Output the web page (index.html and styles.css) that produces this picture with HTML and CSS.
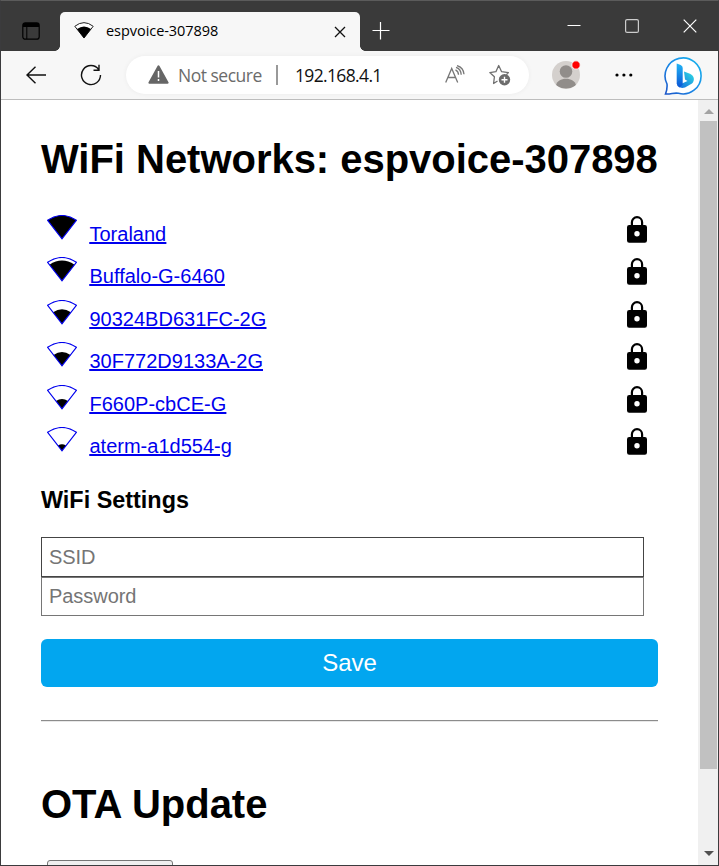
FILE: index.html
```html
<!DOCTYPE html>
<html lang="en">
<head>
<meta charset="utf-8">
<title>espvoice-307898</title>
<link rel="stylesheet" href="styles.css">
</head>
<body>
<svg class="defs" aria-hidden="true">
  <symbol id="fan" viewBox="0 0 30 25"><path d="M.6 5.300Q15-4.300 29.400 5.300L15 23.800Z"/></symbol>
  <symbol id="lock" viewBox="0 0 20 27"><path d="M4.9 10V6.3a5.1 5.1 0 0 1 10.2 0V10" fill="none" stroke="#000" stroke-width="2.200"/><path fill-rule="evenodd" d="M2.2 9h15.6A2.2 2.2 0 0 1 20 11.200V24.500a2.200 2.200 0 0 1-2.200 2.200H2.200A2.200 2.200 0 0 1 0 24.500V11.200A2.200 2.200 0 0 1 2.200 9ZM10 15.100a2.700 2.700 0 1 0 0 5.400 2.700 2.700 0 0 0 0-5.400Z"/></symbol>
</svg>
<div class="window">
  <header class="tabbar">
    <svg class="workspace" width="18" height="18" viewBox="0 0 18 18"><rect x=".8" y=".8" width="16.400" height="16.400" rx="2.500" fill="none" stroke="#000" stroke-width="1.200"/><path d="M1 1h16v4H1zM4.300 5h1v12h-1z"/></svg>
    <div class="tab">
      <svg class="favicon" width="20" height="17" viewBox="0 0 20 17"><path d="M.8 4.300Q10-3 19.200 4.300L10 16Z" fill="#fff" stroke="#222"/><path d="M3 7Q10 2 17 7L10 16.300Z"/></svg>
      <span class="tab-title">espvoice-307898</span>
      <svg class="tab-close" width="12" height="12" viewBox="0 0 12 12"><path d="M1 1l10 10M11 1L1 11" stroke="#111" stroke-width="1.300"/></svg>
    </div>
    <svg class="plus" width="18" height="18" viewBox="0 0 18 18"><path d="M.5 8.500h17M8.500 0v17.500" stroke="#fff" stroke-width="1.200"/></svg>
    <div class="controls">
      <svg width="14" height="14" viewBox="0 0 14 14"><path d="M.5 6.500h13" stroke="#fff"/></svg>
      <svg width="14" height="14" viewBox="0 0 14 14"><rect x=".6" y=".6" width="12.800" height="12.800" rx="1.500" fill="none" stroke="#ccc" stroke-width="1.200"/></svg>
      <svg width="14" height="14" viewBox="0 0 14 14"><path d="M.7.700l12.600 12.600M13.300.700L.7 13.300" stroke="#fff" stroke-width="1.200"/></svg>
    </div>
  </header>
  <nav class="toolbar">
    <svg class="back" width="22" height="20" viewBox="0 0 22 20"><path d="M10.500 1.700L2 10l8.500 8.300M2 10H21" fill="none" stroke="#111" stroke-width="1.400"/></svg>
    <svg class="reload" width="22" height="22" viewBox="0 0 22 22"><path d="M18.700 5.500A9.500 9.500 0 1 0 20.500 11M19 .8v5.400h-5.500" fill="none" stroke="#111" stroke-width="1.400"/></svg>
    <div class="address">
      <svg class="warn" width="21" height="19" viewBox="0 0 21 19"><path d="M10.500 1.300L19.600 17.700H1.400Z" fill="#666" stroke="#666" stroke-width="2" stroke-linejoin="round"/><path d="M10.500 6v6.500M10.500 14v2" stroke="#fff" stroke-width="1.500"/></svg>
      <span class="secure">Not secure</span>
      <i class="bar"></i>
      <span class="url">192.168.4.1</span>
      <svg class="read" width="20" height="19" viewBox="0 0 20 19"><path d="M.7 17.500L6.700 3.500l6 14M2.800 12.500h7.800M10.500 4.800q3 1.500 3 5M11 2.300q5 1.500 5.200 7.500M12 .6q6.500 2 7 8.600" fill="none" stroke="#777" stroke-width="1.300"/></svg>
      <svg class="star" width="22" height="22" viewBox="0 0 22 22"><path d="M8.500 17L4.600 19.500l.8-6.700L.8 8.600l6.100-.9L9.700 1.500l2.900 6.200 6.800.9-2 2.100" fill="none" stroke="#707070" stroke-width="1.300" stroke-linejoin="round"/><circle cx="15.500" cy="15.700" r="5.700" fill="#6c6c6c"/><path d="M12.500 15.700h6M15.500 12.700v6" stroke="#fff" stroke-width="1.400"/></svg>
    </div>
    <svg class="profile" width="30" height="30" viewBox="0 0 30 30"><defs><clipPath id="av"><circle cx="14" cy="16" r="14"/></clipPath></defs><circle cx="14" cy="16" r="14" fill="#d4d0cd"/><g fill="#918d8a" clip-path="url(#av)"><circle cx="14" cy="12.500" r="6.300"/><path d="M4 26.500c1-9 19-9 20 0q-10 6-20 0Z"/></g><circle cx="24" cy="6" r="4.200" fill="#f00" stroke="#f7f7f7"/></svg>
    <svg class="more" width="18" height="4" viewBox="0 0 18 4"><circle cx="2" cy="2" r="1.600"/><circle cx="8.900" cy="2" r="1.600"/><circle cx="15.800" cy="2" r="1.600"/></svg>
    <svg class="bing" width="40" height="40" viewBox="0 0 40 40"><defs><linearGradient id="ring" x1="1" y1="0" x2="0" y2="1"><stop stop-color="#18b7ed"/><stop offset=".5" stop-color="#1a8ce8"/><stop offset="1" stop-color="#1b55c8"/></linearGradient><linearGradient id="stem" x1="0" y1="0" x2="0" y2="1"><stop stop-color="#22b5f5"/><stop offset="1" stop-color="#0b54d4"/></linearGradient><linearGradient id="bowl" x1="1" y1="0" x2="0" y2="1"><stop stop-color="#30e0e4"/><stop offset="1" stop-color="#1265dc"/></linearGradient></defs><path d="M1.500 38Q3.500 33 3 28A18 18 0 1 1 14.500 37.300C10 36.300 7 38.500 1.500 38Z" fill="#fff" stroke="url(#ring)" stroke-width="1.600"/><path d="M20 15.500l6 2.300c4.500 2 5 7 2 9.800L21 31.500q-5 1.500-7.500-2l10-4.500-2.500-1.500Z" fill="url(#bowl)"/><path d="M12.700 7.500l4 1.500q2 1 2 3V28.500l-3 3q-2.800-1-3-4Z" fill="url(#stem)"/></svg>
  </nav>
  <div class="viewport">
    <main class="page">
      <h1>WiFi Networks: espvoice-307898</h1>
      <ul class="networks">
        <li><a href="#"><svg class="signal"><path class="level" d="M.6 5.300Q15-4.300 29.400 5.300L15 23.800Z"/><use href="#fan"/></svg><span>Toraland</span></a><svg class="lock"><use href="#lock"/></svg></li>
        <li><a href="#"><svg class="signal"><g transform="translate(15 23.800) scale(.87) translate(-15 -23.800)"><path class="level" d="M.6 5.300Q15-4.300 29.400 5.300L15 23.800Z"/></g><use href="#fan"/></svg><span>Buffalo-G-6460</span></a><svg class="lock"><use href="#lock"/></svg></li>
        <li><a href="#"><svg class="signal"><g transform="translate(15 23.800) scale(.62) translate(-15 -23.800)"><path class="level" d="M.6 5.300Q15-4.300 29.400 5.300L15 23.800Z"/></g><use href="#fan"/></svg><span>90324BD631FC-2G</span></a><svg class="lock"><use href="#lock"/></svg></li>
        <li><a href="#"><svg class="signal"><g transform="translate(15 23.800) scale(.59) translate(-15 -23.800)"><path class="level" d="M.6 5.300Q15-4.300 29.400 5.300L15 23.800Z"/></g><use href="#fan"/></svg><span>30F772D9133A-2G</span></a><svg class="lock"><use href="#lock"/></svg></li>
        <li><a href="#"><svg class="signal"><g transform="translate(15 23.800) scale(.42) translate(-15 -23.800)"><path class="level" d="M.6 5.300Q15-4.300 29.400 5.300L15 23.800Z"/></g><use href="#fan"/></svg><span>F660P-cbCE-G</span></a><svg class="lock"><use href="#lock"/></svg></li>
        <li><a href="#"><svg class="signal"><g transform="translate(15 23.800) scale(.28) translate(-15 -23.800)"><path class="level" d="M.6 5.300Q15-4.300 29.400 5.300L15 23.800Z"/></g><use href="#fan"/></svg><span>aterm-a1d554-g</span></a><svg class="lock"><use href="#lock"/></svg></li>
      </ul>
      <h3>WiFi Settings</h3>
      <form>
        <input class="ssid" type="text" placeholder="SSID">
        <input class="password" type="password" placeholder="Password">
        <button class="save" type="button">Save</button>
      </form>
      <hr>
      <h1 class="ota">OTA Update</h1>
      <div class="file-button"></div>
    </main>
    <aside class="scrollbar">
      <svg width="10" height="5" viewBox="0 0 10 5"><path d="M0 5L5 0l5 5Z" fill="#a3a3a3"/></svg>
      <div class="thumb"></div>
      <svg class="down" width="10" height="5" viewBox="0 0 10 5"><path d="M0 0h10L5 5Z" fill="#505050"/></svg>
    </aside>
  </div>
</div>
</body>
</html>
```
FILE: styles.css
```css
* { box-sizing: border-box; }
body { margin: 0; overflow: hidden; font-family: "Liberation Sans", Arial, sans-serif; }
svg { display: block; flex: none; }
.defs { width: 0; height: 0; position: absolute; }
.window { width: 719px; height: 866px; border: 1px solid #3b3b3d; border-top-color: #5b5b5b; display: flex; flex-direction: column; overflow: hidden; background: #fff; }
.tabbar { height: 50px; flex: none; background: #3a3a3a; display: flex; align-items: flex-start; }
.workspace { margin: 21px 0 0 21px; }
.tab { position: relative; margin: 11px 0 0 20px; width: 300px; height: 39px; background: #f7f7f7; border-radius: 5px 5px 0 0; display: flex; align-items: center; padding: 0 14px; font: 14.5px/20px "Open Sans", "Noto Sans", sans-serif; }
.tab::before, .tab::after { content: ""; position: absolute; bottom: 0; width: 5px; height: 5px; }
.tab::before { left: -5px; background: radial-gradient(circle at 0 0, #3a3a3a 4.5px, #f7f7f7 5px); }
.tab::after { right: -5px; background: radial-gradient(circle at 100% 0, #3a3a3a 4.5px, #f7f7f7 5px); }
.favicon { margin: 0 12px 3px 0; }
.tab-title { letter-spacing: -.05px; white-space: nowrap; margin-top: -2px; }
.tab-close { margin-left: auto; margin-top: 1px; }
.plus { margin: 21px 0 0 12px; }
.controls { display: flex; gap: 44px; margin: 18px 21px 0 auto; }
.toolbar { height: 49px; flex: none; background: #f7f7f7; border-bottom: 1px solid #bdbdbd; display: flex; align-items: center; font: 17.5px/24px "Open Sans", "Noto Sans", sans-serif; }
.back { margin-left: 24px; margin-top: -1px; }
.reload { margin-left: 33px; }
.address { width: 403px; height: 38px; margin-left: 24px; border-radius: 19px; background: #fff; box-shadow: 0 0 5px #0000000d; display: flex; align-items: center; padding-left: 22px; white-space: nowrap; }
.warn { margin-top: -1px; }
.secure { color: #6b6b6b; width: 98px; margin: -1px 0 0 9px; letter-spacing: -.5px; }
.bar { width: 2px; height: 20px; background: #999; }
.url { margin: -1px 0 0 17px; width: 150px; letter-spacing: -.65px; color: #111; }
.read { margin-top: -2px; }
.star { margin-left: 24px; }
.profile { margin: -2px 0 0 23px; }
.more { margin-left: 33px; }
.bing { margin-left: 31px; margin-top: 1px; }
.viewport { flex: 1; min-height: 0; display: flex; }
.page { width: 697px; padding: 36px 40px 0; overflow: hidden; }
h1 { margin: 0; font-size: 40px; line-height: 46px; white-space: nowrap; letter-spacing: -.03px; }
.networks { list-style: none; margin: 33px 0 0; padding: 0 11px 0 6px; }
.networks li { height: 42.4px; display: flex; justify-content: space-between; align-items: flex-start; }
.networks a { display: flex; color: #00e; font-size: 20px; line-height: 23px; }
.networks a span { margin: 8px 0 0 12.5px; text-decoration: underline; text-decoration-thickness: 2px; }
.signal { width: 30px; height: 25px; overflow: visible; }
.signal use { fill: none; stroke: #00e; stroke-width: 1.2px; overflow: visible; }
.signal .level { fill: #000; stroke: none; }
.lock { width: 20px; height: 27px; margin-top: 1px; }
h3 { margin: 18px 0 0; font-size: 23.4px; line-height: 27px; }
form { margin-top: 23px; display: flex; flex-direction: column; }
input { width: 603px; margin: 0; padding: 0 7px; border: 1px solid #767676; font: 20px "Liberation Sans", Arial, sans-serif; background: #fff; letter-spacing: -.05px; }
input::placeholder { color: #757575; }
.ssid { height: 40px; border-color: #444; }
.password { height: 39px; }
.save { margin: 23px 0 0; height: 48px; border: 0; border-radius: 6px; background: #02a6ef; color: #fff; font: 24px "Liberation Sans", Arial, sans-serif; }
hr { height: 2px; margin: 33px 0 0; border: 0; border-top: 1px solid #8c8c8c; border-bottom: 1px solid #e8e8e8; }
.ota { margin-top: 59px; }
.file-button { width: 126px; height: 30px; margin: 33px 0 0 6px; border: 1px solid #767676; border-radius: 3px; background: #efefef; }
.scrollbar { width: 20px; background: #f0f0f0; display: flex; flex-direction: column; padding: 9px 1px 7px 2px; align-items: center; }
.thumb { width: 17px; height: 648px; flex: none; background: #c1c1c1; margin-top: 7px; }
.down { margin-top: auto; margin-bottom: 2px; }
```
